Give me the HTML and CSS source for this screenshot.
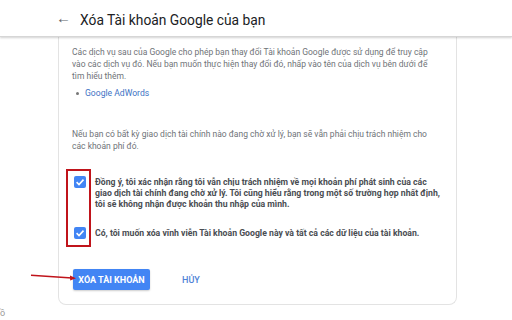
FILE: index.html
```html
<!DOCTYPE html>
<html lang="vi">
<head>
<meta charset="utf-8">
<link rel="stylesheet" href="styles.css">
</head>
<body>
<header class="topbar">
  <span class="back">&#8592;</span>
  <h1 class="title">Xóa Tài khoản Google của bạn</h1>
</header>
<main class="page">
  <section class="card">
    <p class="text">Các dịch vụ sau của Google cho phép bạn thay đổi Tài khoản Google được sử dụng để truy cập<br>vào các dịch vụ đó. Nếu bạn muốn thực hiện thay đổi đó, nhấp vào tên của dịch vụ bên dưới để<br>tìm hiểu thêm.</p>
    <ul class="services">
      <li><a class="link">Google AdWords</a></li>
    </ul>
    <p class="text warn">Nếu bạn có bất kỳ giao dịch tài chính nào đang chờ xử lý, bạn sẽ vẫn phải chịu trách nhiệm cho<br>các khoản phí đó.</p>
    <label class="check first">
      <span class="box"><svg viewBox="0 0 12 12" width="12" height="12"><path d="M2.6 6.2 L5 8.5 L9.5 3.6" fill="none" stroke="#fff" stroke-width="1.6"/></svg></span>
      <span class="ctext">Đồng ý, tôi xác nhận rằng tôi vẫn chịu trách nhiệm về mọi khoản phí phát sinh của các<br>giao dịch tài chính đang chờ xử lý. Tôi cũng hiểu rằng trong một số trường hợp nhất định,<br>tôi sẽ không nhận được khoản thu nhập của mình.</span>
    </label>
    <label class="check second">
      <span class="box"><svg viewBox="0 0 12 12" width="12" height="12"><path d="M2.6 6.2 L5 8.5 L9.5 3.6" fill="none" stroke="#fff" stroke-width="1.6"/></svg></span>
      <span class="ctext">Có, tôi muốn xóa vĩnh viễn Tài khoản Google này và tất cả các dữ liệu của tài khoản.</span>
    </label>
    <div class="actions">
      <button class="btn primary">XÓA TÀI KHOẢN</button>
      <button class="btn flat">HỦY</button>
    </div>
    <div class="redbox"></div>
    <svg class="arrow" width="48" height="10" viewBox="0 0 48 10"><path d="M1 3.2 L42 6" stroke="#c0141b" stroke-width="1.6" fill="none"/><path d="M46 6.3 L40 3.4 L40.2 8.6 Z" fill="#c0141b"/></svg>
  </section>
  <span class="corner">ồ</span>
</main>
</body>
</html>
```
FILE: styles.css
```css
* { box-sizing: border-box; }
html, body { margin: 0; padding: 0; background: #fff; }
body {
  width: 512px;
  height: 320px;
  overflow: hidden;
  font-family: Roboto, "Liberation Sans", Arial, sans-serif;
  position: relative;
}
.topbar {
  height: 37px;
  display: flex;
  align-items: center;
  padding-left: 56px;
  background: #fff;
  border-bottom: 1px solid #d6d6d6;
  box-shadow: 0 1px 2px rgba(0,0,0,0.18);
  position: relative;
  z-index: 2;
}
.back {
  font-size: 15px;
  color: #5f6368;
  width: 24px;
  line-height: 1;
  margin-top: 1px;
}
.title {
  margin: 0;
  font-weight: 400;
  font-size: 13.8px;
  color: #202124;
  margin-top: 3px;
}
.page {
  padding-left: 58px;
}
.card {
  position: relative;
  width: 399px;
  border: 1px solid #e3e3e3;
  border-top: none;
  border-radius: 0 0 8px 8px;
  padding: 9px 12px 14px 13px;
}
.text {
  margin: 0;
  font-size: 8.5px;
  line-height: 12px;
  color: #6f7378;
  white-space: nowrap;
}
.services {
  margin: 5px 0 0 0;
  padding-left: 13px;
  font-size: 8.6px;
  line-height: 12px;
  list-style: none;
}
.services li { position: relative; }
.services li::before {
  content: "";
  position: absolute;
  left: -9px;
  top: 5px;
  width: 3px;
  height: 3px;
  border-radius: 50%;
  background: #777;
}
.link { color: #3d72c4; }
.warn { margin-top: 29px; }
.check {
  display: flex;
  align-items: flex-start;
  gap: 9px;
  font-size: 8.7px;
  line-height: 11.3px;
  font-weight: 700;
  color: #4a4d52;
  white-space: nowrap;
}
.check.first { margin-top: 24px; }
.check.second { margin-top: 17px; }
.box {
  flex: none;
  width: 12px;
  height: 12px;
  margin-left: 2px;
  border-radius: 2px;
  background: #4285f4;
  display: flex;
}
.ctext { padding-top: 0.5px; }
.actions {
  display: flex;
  align-items: center;
  gap: 32px;
  margin-top: 30px;
}
.btn {
  font-family: Roboto, "Liberation Sans", Arial, sans-serif;
  font-weight: 700;
  font-size: 9px;
  border: none;
  padding: 0;
  background: none;
}
.primary {
  width: 77px;
  height: 21px;
  margin-left: 1px;
  background: #4285f4;
  color: #fff;
  border-radius: 2px;
  box-shadow: 0 1px 2px rgba(0,0,0,0.2);
}
.flat {
  color: #4f82d6;
  font-weight: 500;
}
.redbox {
  position: absolute;
  left: 7px;
  top: 132px;
  width: 25px;
  height: 78px;
  border: 2px solid #c0141b;
}
.arrow {
  position: absolute;
  left: -29px;
  top: 235px;
}
.corner {
  position: absolute;
  left: 0;
  top: 308px;
  font-size: 9px;
  color: #999;
}
```
